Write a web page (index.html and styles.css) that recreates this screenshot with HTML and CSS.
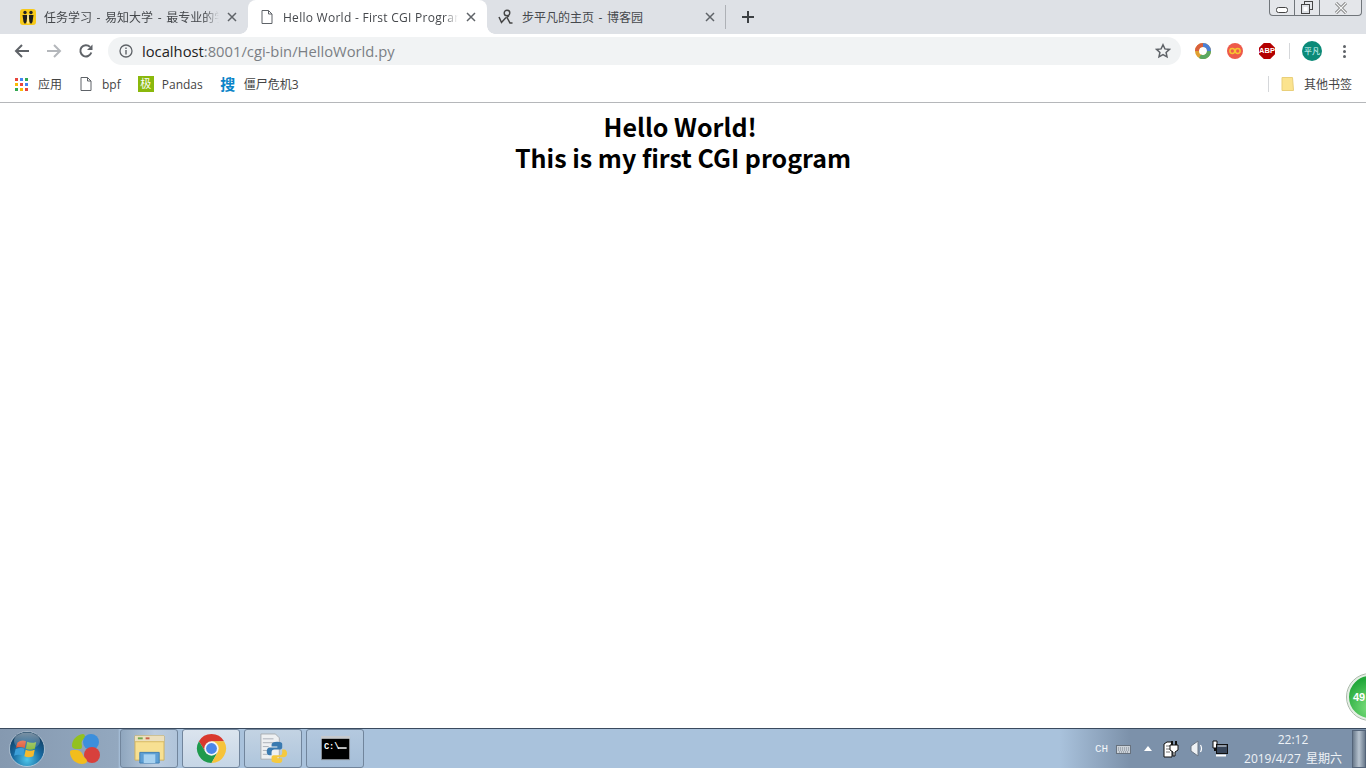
FILE: index.html
```html
<!DOCTYPE html>
<html lang="zh">
<head>
<meta charset="utf-8">
<title>Hello World - First CGI Program</title>
<link rel="stylesheet" href="styles.css">
</head>
<body>
<div class="screen">
  <header class="chrome">
    <div class="tabstrip">
      <div class="tab">
        <svg class="fav" viewBox="0 0 16 16"><rect width="16" height="16" rx="3" fill="#f7c919"/><circle cx="5" cy="3.500" r="1.700" fill="#222"/><circle cx="11" cy="3.500" r="1.700" fill="#222"/><path d="M2.500 6h5l-1 7-1.500 2-1.500-2zM8.500 6h5l-1 7-1.500 2-1.500-2z" fill="#1c1c1c"/><path d="M7.300 5.500h1.400v9H7.300z" fill="#fff4c0"/></svg>
        <span class="tab-title fade tab-cjk">任务学习 - 易知大学 - 最专业的学习平台</span>
        <svg class="tab-x" viewBox="0 0 10 10"><path d="M1 1l8 8M9 1l-8 8"/></svg>
      </div>
      <div class="tab active">
        <svg class="fav" viewBox="0 0 16 16"><path d="M3 1.500h6.500L13 5v9.500H3z M9.500 1.500V5H13" fill="#fff" stroke="#5f6368" stroke-width="1"/></svg>
        <span class="tab-title fade tab-latin">Hello World - First CGI Program</span>
        <svg class="tab-x" viewBox="0 0 10 10"><path d="M1 1l8 8M9 1l-8 8"/></svg>
      </div>
      <div class="tab">
        <svg class="fav" viewBox="0 0 16 16"><circle cx="9" cy="4" r="2.800" fill="none" stroke="#444" stroke-width="1.400"/><path d="M1 8l2.500 5.500L8 8.500M11 6.500l-2 2 3 5.500h2.500" fill="none" stroke="#444" stroke-width="1.500"/></svg>
        <span class="tab-title tab-cjk">步平凡的主页 - 博客园</span>
        <svg class="tab-x" viewBox="0 0 10 10"><path d="M1 1l8 8M9 1l-8 8"/></svg>
      </div>
      <span class="tab-sep"></span>
      <svg class="newtab" viewBox="0 0 12 12"><path d="M6 0v12M0 6h12"/></svg>
      <div class="winctl">
        <span class="wc wc-min"><svg viewBox="0 0 14 8"><rect x="1.500" y="1.500" width="11" height="5" rx="2" fill="#fff" stroke="#444"/></svg></span>
        <span class="wc wc-max"><svg viewBox="0 0 14 13"><rect x="4.500" y="0.500" width="8" height="8" fill="none" stroke="#444"/><rect x="1.500" y="3.500" width="8" height="9" fill="#dee1e6" stroke="#444"/><rect x="3.500" y="6" width="4" height="4" fill="#fff"/></svg></span>
        <span class="wc wc-close"><svg viewBox="0 0 14 12"><path d="M2 1l10 10M12 1L2 11" stroke="#777" stroke-width="3" fill="none"/><path d="M2 1l10 10M12 1L2 11" stroke="#f4f5f6" stroke-width="1.300" fill="none"/></svg></span>
      </div>
    </div>
    <div class="toolbar">
      <svg class="nav" viewBox="0 0 16 16"><path d="M15 8H2M8 2L2 8l6 6" stroke="#5f6368"/></svg>
      <svg class="nav" viewBox="0 0 16 16"><path d="M1 8h13M8 2l6 6-6 6" stroke="#b4b7bb"/></svg>
      <svg class="nav" viewBox="0 0 16 16"><path d="M13.300 9.500A5.600 5.600 0 1 1 12 3.900" stroke="#5f6368" fill="none"/><path d="M14.500 1.500v5.500H9z" fill="#5f6368"/></svg>
      <div class="omnibox">
        <svg class="info" viewBox="0 0 14 14"><circle cx="7" cy="7" r="6" fill="none" stroke="#5f6368" stroke-width="1.300"/><path d="M7 6v4.500M7 3.400v1.500" stroke="#5f6368" stroke-width="1.400"/></svg>
        <span class="url"><span class="host">localhost</span>:8001/cgi-bin/HelloWorld.py</span>
        <svg class="star" viewBox="0 0 16 16"><path d="M8 1.800l1.900 4.100 4.500.5-3.300 3 .9 4.500L8 11.600l-4 2.300.9-4.500-3.300-3 4.500-.5z" fill="none" stroke="#5f6368" stroke-width="1.500"/></svg>
      </div>
      <svg class="ext ext-first" viewBox="0 0 16 16"><circle cx="8" cy="8" r="6" fill="none" stroke="#e0a030" stroke-width="4"/><path d="M8 2a6 6 0 0 1 6 6" fill="none" stroke="#4a80d8" stroke-width="4"/><path d="M14 8a6 6 0 0 1-9 5.200" fill="none" stroke="#5aa860" stroke-width="4"/><path d="M2 8a6 6 0 0 1 6-6" fill="none" stroke="#d9603c" stroke-width="4"/></svg>
      <svg class="ext" viewBox="0 0 16 16"><circle cx="8" cy="8" r="8" fill="#ee5a4a"/><circle cx="5.300" cy="8" r="2.400" fill="none" stroke="#f7c531" stroke-width="1.500"/><circle cx="10.700" cy="8" r="2.400" fill="none" stroke="#f7c531" stroke-width="1.500"/></svg>
      <span class="abp">ABP</span>
      <span class="tool-sep"></span>
      <span class="avatar">平凡</span>
      <span class="menu"><i></i><i></i><i></i></span>
    </div>
    <div class="bookmarks">
      <div class="bm">
        <svg class="bm-ic" viewBox="0 0 13 13"><g><rect x="0" y="0" width="3" height="3" fill="#e8453c"/><rect x="5" y="0" width="3" height="3" fill="#4285f4"/><rect x="10" y="0" width="3" height="3" fill="#34a853"/><rect x="0" y="5" width="3" height="3" fill="#fbbc05"/><rect x="5" y="5" width="3" height="3" fill="#e8453c"/><rect x="10" y="5" width="3" height="3" fill="#4285f4"/><rect x="0" y="10" width="3" height="3" fill="#34a853"/><rect x="5" y="10" width="3" height="3" fill="#fbbc05"/><rect x="10" y="10" width="3" height="3" fill="#e8453c"/></g></svg>
        <span>应用</span>
      </div>
      <div class="bm bm-wide">
        <svg class="bm-ic16" viewBox="0 0 16 16"><path d="M3 1.500h6.500L13 5v9.500H3z M9.500 1.500V5H13" fill="#fff" stroke="#5f6368"/></svg>
        <span>bpf</span>
      </div>
      <div class="bm bm-wide">
        <span class="ji">极</span>
        <span>Pandas</span>
      </div>
      <div class="bm">
        <span class="sou">搜</span>
        <span>僵尸危机3</span>
      </div>
      <span class="bm-sep"></span>
      <div class="bm bm-last">
        <svg class="bm-ic16" viewBox="0 0 16 16"><path d="M2 1.500h10.500l1 13H2z" fill="#fbe38e" stroke="#e9cf7a"/></svg>
        <span>其他书签</span>
      </div>
    </div>
  </header>

  <main class="page">
    <h2>Hello World!&nbsp;<br>This is my first CGI program</h2>
  </main>

  <footer class="taskbar">
    <div class="start">
      <svg class="orb" viewBox="0 0 36 36">
        <defs>
          <radialGradient id="g" cx="50%" cy="80%" r="75%"><stop offset="0" stop-color="#4fc6ea"/><stop offset="0.55" stop-color="#17689f"/><stop offset="1" stop-color="#113a5c"/></radialGradient>
          <linearGradient id="gl" x1="0" y1="0" x2="0" y2="1"><stop offset="0" stop-color="#fff" stop-opacity="0.45"/><stop offset="1" stop-color="#fff" stop-opacity="0.05"/></linearGradient>
        </defs>
        <circle cx="18" cy="18" r="17.500" fill="url(#g)" stroke="#dfe8f0" stroke-opacity="0.6"/>
        <path d="M8.500 11.500q4-3 8.500-1.300l-1.300 6.800q-4-2-8.800-.3z" fill="#e0512c"/>
        <path d="M18.200 10.700q4 2 9 .2l-1.300 6.800q-4.700 2-9 0z" fill="#86b83d"/>
        <path d="M6.600 18q5-2 8.800 0l-1.300 6.800q-4.800-2-9 0z" fill="#3c9fd8"/>
        <path d="M16.700 18.700q4 2 9 0l-1.300 6.600q-5 2-9 0z" fill="#f6ba2c"/>
        <ellipse cx="18" cy="10" rx="13" ry="8.500" fill="url(#gl)"/>
      </svg>
    </div>
    <div class="pin">
      <svg viewBox="0 0 32 32">
        <path d="M14 1C7 2 3 7 3 13c0 2 2 3 4 3h4c2 0 2-2 2-3s-1-3 0-5 3-2 3-4-1-3-2-3z" fill="#93c11f"/>
        <circle cx="22" cy="9" r="8" fill="#3c8fdc"/>
        <circle cx="23" cy="22" r="8" fill="#d8403c"/>
        <path d="M1 19c0 7 6 12 12 12 3 0 5-1 5-3s-2-3-3-4-1-3-3-5-4-2-6-2-5 0-5 2z" fill="#f2bd1d"/>
      </svg>
    </div>
    <div class="tb-btn tb-folder">
      <svg viewBox="0 0 32 32"><path d="M1 3h30v25H1z" fill="#f7e092" stroke="#cdb160"/><path d="M1 3h30v6H1z" fill="#ece0bd"/><path d="M4 5.500h5" stroke="#6fa84e" stroke-width="2"/><path d="M12 5.500h4" stroke="#c8604a" stroke-width="2"/><path d="M1 9h30" stroke="#d7b95e"/><path d="M6 20h20v11H6z" fill="#5e9fd4" stroke="#3f7fb4"/><path d="M10 22h12v9H10z" fill="#a8d2f0"/></svg>
    </div>
    <div class="tb-btn tb-on">
      <svg viewBox="0 0 32 32"><path d="M29 8.500A15 15 0 0 0 3 8.500L9.900 19.500 16 9z" fill="#d9392e"/><path d="M3 8.500A15 15 0 0 0 16 31l6-10.500-12.100-1z" fill="#1f9a4d"/><path d="M16 31A15 15 0 0 0 29 8.500H16l6.100 12z" fill="#f6c33a"/><circle cx="16" cy="16" r="7.400" fill="#f2f4f6"/><circle cx="16" cy="16" r="5.600" fill="#4a86e8"/></svg>
    </div>
    <div class="tb-btn">
      <svg viewBox="0 0 32 32"><path d="M3 1h15l4 4v22H3z" fill="#eef0f2" stroke="#a8adb3"/><path d="M5 6h11M5 10h13M5 14h6M5 18h5M5 22h5" stroke="#aab0b8"/><path d="M20 9c-4 0-6 1-6 3v2h6v1h-8c-2 0-3 2-3 4s1 4 3 4h2v-3c0-2 1-3 3-3h6c1 0 2-1 2-2v-4c0-1-2-2-5-2z" fill="#3a7ab0"/><path d="M20 31c4 0 5-1 5-3v-2h-5v-1h7c2 0 3-2 3-4s-1-4-3-4h-2v3c0 2-1 3-3 3h-6c-1 0-2 1-2 2v4c0 1 3 2 6 2z" fill="#f5c93f"/></svg>
    </div>
    <div class="tb-btn tb-cmd">
      <svg viewBox="0 0 32 32"><rect x="1.500" y="4.500" width="29" height="23" fill="#000" stroke="#8a8f96"/><rect x="1" y="3" width="30" height="3" fill="#c6c9cd"/><text x="4" y="16" class="cmd-text">C:\</text><path d="M18.500 15.500h9" stroke="#fff" stroke-width="1.500"/></svg>
    </div>
    <div class="tray">
      <span class="lang">CH</span>
      <svg class="tray-kb" viewBox="0 0 15 10"><rect x="0.500" y="1.500" width="14" height="8" fill="#ccd2d8" stroke="#68727e"/><path d="M2 4h11M2 6h11M3 8h9" stroke="#78828e" stroke-dasharray="1 1"/></svg>
      <svg class="tray-up" viewBox="0 0 8 5"><path d="M4 0l4 5H0z" fill="#fff"/></svg>
      <svg class="tray-power" viewBox="0 0 16 19"><path d="M1 5l3-2h5v15H1z" fill="#fff" stroke="#111"/><path d="M3 7h4M3 10h4M3 13h4" stroke="#777"/><path d="M9 2v4M13 2v4" stroke="#111" stroke-width="2"/><path d="M7 6h8v5l-3 2v4H10v-4L7 11z" fill="#fff" stroke="#111"/></svg>
      <svg class="tray-speaker" viewBox="0 0 13 17"><path d="M1 6l7-5v15l-7-5z" fill="#eef1f4" stroke="#6b7684"/><path d="M10.500 5q2 3.500 0 7" stroke="#fff" stroke-width="1.200" fill="none"/></svg>
      <svg class="tray-net" viewBox="0 0 16 17"><path d="M1 1h4v7H1z" fill="#fff" stroke="#111"/><path d="M2 8h2v3H2z" fill="#111"/><rect x="4.500" y="4.500" width="11" height="9" fill="#38465a" stroke="#111"/><path d="M5.500 5.500h9v1h-9z" fill="#e6ecf2"/><path d="M4 15.500h10" stroke="#fff" stroke-width="2"/></svg>
      <div class="clock"><span>22:12</span><span>2019/4/27 星期六</span></div>
      <span class="show-desktop"></span>
    </div>
  </footer>
  <div class="gauge"><span>49</span></div>
</div>
</body>
</html>
```

FILE: styles.css
```css
* { box-sizing: border-box; }
html, body { margin: 0; height: 100%; background: #fff; overflow: hidden; }
.screen {
  width: 1366px; height: 768px; position: relative; display: flex; flex-direction: column; overflow: hidden;
  font-family: "Open Sans", "Noto Sans CJK SC", sans-serif; font-size: 12px; color: #3c4043;
}
.chrome { flex: none; }

.tabstrip { height: 34px; background: #dee1e6; display: flex; align-items: flex-start; padding-left: 9px; }
.tab { width: 239px; height: 34px; display: flex; align-items: center; padding: 0 0 0 11px; position: relative; }
.tab.active { background: #fff; border-radius: 8px 8px 0 0; }
.tab.active::before, .tab.active::after { content: ""; position: absolute; bottom: 0; width: 8px; height: 8px; }
.tab.active::before { left: -8px; background: radial-gradient(circle at 0 0, transparent 7.500px, #fff 8px); }
.tab.active::after { right: -8px; background: radial-gradient(circle at 100% 0, transparent 7.500px, #fff 8px); }
.fav { width: 16px; height: 16px; flex: none; }
.tab-title { margin-left: 8px; flex: 1; min-width: 0; white-space: nowrap; overflow: hidden; font-size: 12px; color: #45484c; }
.tab-cjk { word-spacing: 1.500px; }
.tab-latin { letter-spacing: 0.270px; }
.fade { -webkit-mask-image: linear-gradient(90deg, #000 92%, transparent 100%); mask-image: linear-gradient(90deg, #000 92%, transparent 100%); }
.tab-x { width: 10px; height: 10px; margin: 0 11px 0 8px; flex: none; fill: none; stroke: #5f6368; stroke-width: 1.500; }
.tab-sep { width: 1px; height: 24px; background: #aeb1b6; margin: 5px 0 0 -1px; flex: none; }
.newtab { width: 12px; height: 12px; margin: 11px 0 0 16px; flex: none; fill: none; stroke: #3c4043; stroke-width: 2; }
.winctl { margin-left: auto; margin-right: 4px; height: 16px; display: flex; border: 1px solid #70757a; border-top: 0; border-radius: 0 0 4px 4px; background: #e4e6ea; }
.wc { display: flex; align-items: center; justify-content: center; border-right: 1px solid #70757a; }
.wc:last-child { border-right: 0; }
.wc-min { width: 25px; }
.wc-max { width: 25px; }
.wc-close { width: 41px; }
.wc-min svg { width: 14px; height: 8px; margin-top: 4px; }
.wc-max svg { width: 14px; height: 13px; }
.wc-close svg { width: 14px; height: 12px; }

.toolbar { height: 34px; background: #fff; display: flex; align-items: center; padding-left: 14px; }
.nav { width: 16px; height: 16px; flex: none; margin-right: 16px; fill: none; stroke-width: 2; }
.omnibox { width: 1073px; height: 28px; margin-left: -2px; background: #f1f3f4; border-radius: 14px; display: flex; align-items: center; padding: 0 10px 0 11px; }
.info { width: 14px; height: 14px; flex: none; }
.url { margin-left: 9px; flex: 1; font-size: 14.750px; color: #7b7f84; white-space: nowrap; }
.host { color: #222; }
.star { width: 16px; height: 16px; flex: none; }
.ext { width: 16px; height: 16px; flex: none; margin-left: 16px; }
.ext-first { margin-left: 14px; }
.abp { width: 16px; height: 16px; margin-left: 16px; flex: none; background: #b30000; color: #fff; font: bold 7.500px/16px "Liberation Sans", sans-serif; text-align: center; clip-path: polygon(30% 0, 70% 0, 100% 30%, 100% 70%, 70% 100%, 30% 100%, 0 70%, 0 30%); }
.tool-sep { width: 1px; height: 16px; background: #d5d7da; margin-left: 14px; flex: none; }
.avatar { width: 20px; height: 20px; margin-left: 12px; border-radius: 50%; background: #0b8a78; color: #dff; font-size: 8px; line-height: 20px; text-align: center; flex: none; }
.menu { display: flex; flex-direction: column; gap: 2px; margin-left: 21px; flex: none; }
.menu i { width: 3px; height: 3px; border-radius: 50%; background: #5f6368; display: block; }

.bookmarks { height: 35px; background: #fff; border-bottom: 1px solid #b5b7ba; display: flex; align-items: center; padding: 0 14px 2px 15px; }
.bm { display: flex; align-items: center; color: #444; font-size: 12px; margin-right: 16px; white-space: nowrap; }
.bm-wide { margin-right: 17px; }
.bm-ic { width: 13px; height: 13px; margin-right: 10px; flex: none; }
.bm-ic16 { width: 16px; height: 16px; margin-right: 8px; flex: none; }
.ji { width: 16px; height: 16px; background: #8ab80c; color: #fff; font-size: 11px; line-height: 16px; text-align: center; margin-right: 8px; flex: none; }
.sou { width: 16px; height: 16px; color: #0a84c8; font-size: 15px; font-weight: 700; line-height: 16px; text-align: center; margin-right: 8px; flex: none; }
.bm-sep { width: 1px; height: 16px; background: #d5d7da; margin-left: auto; margin-right: 11px; }
.bm-last { margin-right: 0; }

.page { flex: 1; min-height: 0; background: #fff; }
h2 { margin: 8px 0 0; text-align: center; color: #000; font-family: "Noto Sans CJK SC", sans-serif; font-size: 25px; line-height: 31px; font-weight: 700; }

.taskbar { height: 40px; flex: none; display: flex; align-items: stretch; border-top: 1px solid #3a4a5e; background: linear-gradient(90deg, #8599b0 0, #93a8bf 118px, #a9c2dc 120px, #a9c2dc 1060px, #7c91aa 1130px, #7c91aa 100%); }
.start { width: 54px; display: flex; align-items: center; padding-left: 9px; }
.orb { width: 36px; height: 36px; }
.pin { width: 66px; display: flex; align-items: center; justify-content: center; }
.pin svg { width: 32px; height: 32px; margin-left: -5px; }
.tb-btn { width: 58px; margin: 0 4px 0 0; display: flex; align-items: center; justify-content: center; border: 1px solid #71859c; border-radius: 3px; background: linear-gradient(180deg, #c3d3e3, #aec5dc); }
.tb-folder { background: linear-gradient(90deg, #8fa6be, #bccde0 60%, #b0c4da); }
.tb-on { background: linear-gradient(180deg, #dbe4ee, #c6d6e6); }
.tb-cmd { background: linear-gradient(180deg, #b4c9df, #a5bed8); }
.tb-btn svg { width: 31px; height: 31px; }
.cmd-text { fill: #fff; font: bold 9px "Liberation Mono", monospace; }
.tray { margin-left: auto; display: flex; align-items: center; color: #fff; }
.lang { font: 11px "Liberation Mono", monospace; color: #f2f5f8; width: 21px; }
.tray-kb { width: 15px; height: 10px; margin-right: 13px; }
.tray-up { width: 8px; height: 5px; margin-right: 11px; }
.tray-power { width: 16px; height: 19px; margin-right: 11px; }
.tray-speaker { width: 13px; height: 17px; margin-right: 9px; }
.tray-net { width: 16px; height: 17px; }
.clock { width: 112px; margin-left: 9px; display: flex; flex-direction: column; align-items: center; font-size: 12px; line-height: 19px; color: #eef2f6; white-space: nowrap; word-spacing: 2px; }
.show-desktop { width: 14px; height: 38px; margin-left: 3px; border: 1px solid #55657a; background: linear-gradient(90deg, #6a7a8c, #b8c4d0, #6a7a8c); }

.gauge { position: absolute; left: 1347px; top: 674px; width: 46px; height: 46px; border-radius: 50%; border: 2px solid #e4efe4; outline: 1px solid #a9b8a9; background: radial-gradient(circle at 50% 75%, #7fe07f, #22a83a 75%); color: #fff; font: bold 11px/42px "Liberation Sans", sans-serif; padding-left: 4px; }
```
